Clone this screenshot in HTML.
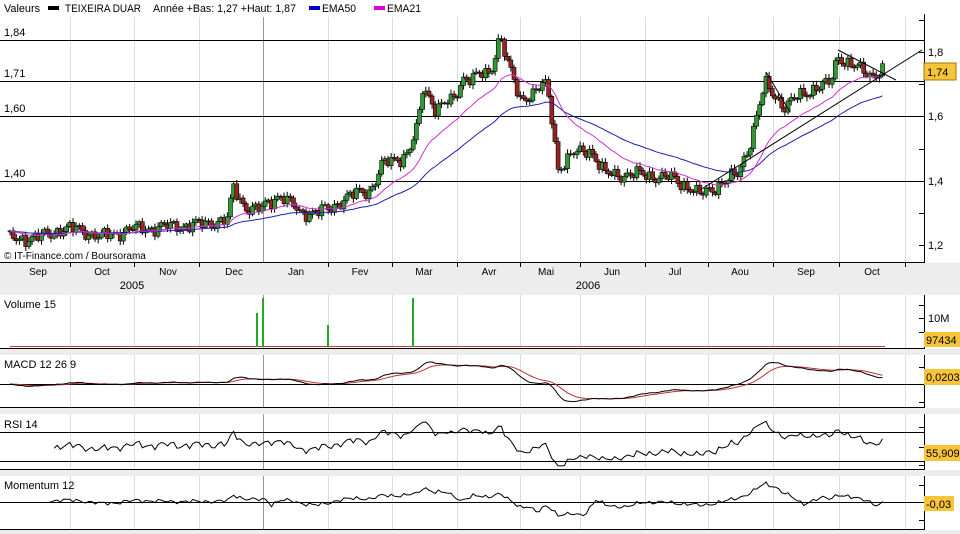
<!DOCTYPE html>
<html><head><meta charset="utf-8">
<style>
html,body{margin:0;padding:0;background:#ededed;}
body{width:960px;height:534px;overflow:hidden;position:relative;font-family:"Liberation Sans",sans-serif;}
svg{position:absolute;left:0;top:0;}
text{font-family:"Liberation Sans",sans-serif;font-size:11px;fill:#000;}
</style></head><body>
<svg id="s" width="960" height="534" xmlns="http://www.w3.org/2000/svg">
<rect x="0" y="0" width="960" height="263" fill="#fff"/>
<rect x="0" y="295" width="960" height="54" fill="#fff"/>
<rect x="0" y="355" width="960" height="53" fill="#fff"/>
<rect x="0" y="414" width="960" height="56" fill="#fff"/>
<rect x="0" y="476" width="960" height="54" fill="#fff"/>
<g id="grid" stroke="#dcdcdc" stroke-width="1"></g>
<g stroke="#000" stroke-width="1">
<line x1="0" y1="40.5" x2="924" y2="40.5"/>
<line x1="0" y1="81.5" x2="924" y2="81.5"/>
<line x1="0" y1="116.5" x2="924" y2="116.5"/>
<line x1="0" y1="181.5" x2="924" y2="181.5"/>
<line x1="0" y1="262.5" x2="924" y2="262.5"/>
<line x1="0" y1="348.5" x2="924" y2="348.5"/>
<line x1="0" y1="384.5" x2="924" y2="384.5"/>
<line x1="0" y1="407.5" x2="924" y2="407.5"/>
<line x1="0" y1="432.5" x2="924" y2="432.5"/>
<line x1="0" y1="461.5" x2="924" y2="461.5"/>
<line x1="0" y1="469.5" x2="924" y2="469.5"/>
<line x1="0" y1="502.5" x2="924" y2="502.5"/>
<line x1="0" y1="529.5" x2="924" y2="529.5"/>
<line x1="924.5" y1="14" x2="924.5" y2="263"/>
<line x1="924.5" y1="295" x2="924.5" y2="349"/>
<line x1="924.5" y1="355" x2="924.5" y2="408"/>
<line x1="924.5" y1="414" x2="924.5" y2="470"/>
<line x1="924.5" y1="476" x2="924.5" y2="530"/>
</g>
<g stroke="#000">
<line x1="919" y1="20.5" x2="924" y2="20.5"/><line x1="919" y1="52.5" x2="924" y2="52.5"/><line x1="919" y1="84.5" x2="924" y2="84.5"/>
<line x1="919" y1="116.5" x2="924" y2="116.5"/><line x1="919" y1="149.5" x2="924" y2="149.5"/><line x1="919" y1="181.5" x2="924" y2="181.5"/>
<line x1="919" y1="213.5" x2="924" y2="213.5"/><line x1="919" y1="245.5" x2="924" y2="245.5"/>
<line x1="919" y1="305.5" x2="924" y2="305.5"/><line x1="919" y1="318.5" x2="924" y2="318.5"/><line x1="919" y1="332.5" x2="924" y2="332.5"/>
<line x1="919" y1="367.5" x2="924" y2="367.5"/><line x1="919" y1="402.5" x2="924" y2="402.5"/>
<line x1="919" y1="427.5" x2="924" y2="427.5"/><line x1="919" y1="447.5" x2="924" y2="447.5"/><line x1="919" y1="465.5" x2="924" y2="465.5"/>
<line x1="919" y1="485.5" x2="924" y2="485.5"/><line x1="919" y1="520.5" x2="924" y2="520.5"/>
</g>
<g id="data"></g>
<g stroke="#000" stroke-width="1" fill="none">
<line x1="700" y1="190" x2="922" y2="50"/>
<line x1="766" y1="72" x2="790" y2="112"/>
<line x1="838" y1="50" x2="896" y2="80"/>
</g>
<text x="4" y="12" textLength="36" lengthAdjust="spacingAndGlyphs">Valeurs</text>
<rect x="48" y="6" width="11" height="4" fill="#000"/>
<text x="65" y="12" textLength="76" lengthAdjust="spacingAndGlyphs">TEIXEIRA DUAR</text>
<text x="153" y="12" textLength="143" lengthAdjust="spacingAndGlyphs">Année +Bas: 1,27 +Haut: 1,87</text>
<rect x="309" y="6" width="11" height="4" fill="#0000cc"/>
<text x="322" y="12" textLength="34" lengthAdjust="spacingAndGlyphs">EMA50</text>
<rect x="374" y="6" width="11" height="4" fill="#dd00dd"/>
<text x="387" y="12" textLength="34" lengthAdjust="spacingAndGlyphs">EMA21</text>
<text x="4" y="36">1,84</text>
<text x="4" y="77">1,71</text>
<text x="4" y="112">1,60</text>
<text x="4" y="177">1,40</text>
<text x="928" y="56">1,8</text>
<text x="928" y="120">1,6</text>
<text x="928" y="185">1,4</text>
<text x="928" y="249">1,2</text>
<rect x="924" y="63" width="32" height="17" fill="#f8c53a" stroke="#a07800"/>
<text x="927" y="76">1,74</text>
<text x="4" y="259" style="font-size:10px">© IT-Finance.com / Boursorama</text>
<g style="font-size:10px">
<text x="38" y="275" text-anchor="middle" style="font-size:10px">Sep</text>
<text x="102" y="275" text-anchor="middle" style="font-size:10px">Oct</text>
<text x="168" y="275" text-anchor="middle" style="font-size:10px">Nov</text>
<text x="234" y="275" text-anchor="middle" style="font-size:10px">Dec</text>
<text x="296" y="275" text-anchor="middle" style="font-size:10px">Jan</text>
<text x="360" y="275" text-anchor="middle" style="font-size:10px">Fev</text>
<text x="424" y="275" text-anchor="middle" style="font-size:10px">Mar</text>
<text x="489" y="275" text-anchor="middle" style="font-size:10px">Avr</text>
<text x="546" y="275" text-anchor="middle" style="font-size:10px">Mai</text>
<text x="612" y="275" text-anchor="middle" style="font-size:10px">Jun</text>
<text x="675" y="275" text-anchor="middle" style="font-size:10px">Jul</text>
<text x="740" y="275" text-anchor="middle" style="font-size:10px">Aou</text>
<text x="806" y="275" text-anchor="middle" style="font-size:10px">Sep</text>
<text x="872" y="275" text-anchor="middle" style="font-size:10px">Oct</text>
<text x="132" y="289" text-anchor="middle">2005</text>
<text x="588" y="289" text-anchor="middle">2006</text>
</g>
<text x="4" y="308">Volume 15</text>
<text x="928" y="322">10M</text>
<rect x="924" y="332" width="36" height="15" fill="#f8c53a"/>
<text x="926" y="344">97434</text>
<text x="4" y="368">MACD 12 26 9</text>
<rect x="924" y="369" width="36" height="16" fill="#f8c53a"/>
<text x="926" y="381">0,0203</text>
<text x="4" y="428">RSI 14</text>
<rect x="924" y="445" width="36" height="16" fill="#f8c53a"/>
<text x="926" y="457">55,909</text>
<text x="4" y="489">Momentum 12</text>
<rect x="924" y="496" width="30" height="15" fill="#f8c53a"/>
<text x="926" y="508">-0,03</text>
</svg>
<script>
(function(){
var NS="http://www.w3.org/2000/svg";
function el(p,t,a){var e=document.createElementNS(NS,t);for(var k in a)e.setAttribute(k,a[k]);p.appendChild(e);return e;}
var grid=document.getElementById('grid'),d=document.getElementById('data');
var gx=[70,134,199,328,392,457,520,580,645,708,773,839,905];
var bands=[[17,262],[295,348],[355,407],[414,469],[476,529]];
gx.forEach(function(x){bands.forEach(function(b){el(grid,'line',{x1:x+.5,y1:b[0],x2:x+.5,y2:b[1]});});
 el(grid,'line',{x1:x+.5,y1:262,x2:x+.5,y2:267,stroke:'#000'});});
bands.forEach(function(b){el(grid,'line',{x1:263.5,y1:b[0],x2:263.5,y2:b[1],stroke:'#999'});});
var K=[[10,1.22],[40,1.225],[60,1.25],[80,1.25],[100,1.225],[130,1.25],[200,1.265],[228,1.28],[233,1.38],[245,1.32],[260,1.31],[280,1.36],[300,1.30],[330,1.31],[345,1.35],[370,1.37],[382,1.45],[400,1.47],[408,1.49],[418,1.57],[423,1.69],[435,1.63],[455,1.65],[462,1.72],[490,1.73],[500,1.86],[508,1.76],[520,1.65],[545,1.70],[550,1.64],[558,1.44],[572,1.48],[590,1.50],[605,1.42],[640,1.42],[670,1.41],[690,1.38],[700,1.355],[720,1.39],[738,1.42],[750,1.52],[765,1.70],[785,1.63],[798,1.66],[815,1.69],[830,1.70],[838,1.79],[850,1.76],[870,1.73],[885,1.745]];
function interp(x){for(var i=1;i<K.length;i++){if(x<=K[i][0]){var a=K[i-1],b=K[i],t=(x-a[0])/(b[0]-a[0]);return a[1]+t*(b[1]-a[1]);}}return K[K.length-1][1];}
function Y(p){return 52+(1.8-p)*322.5;}
var xs=[],cl=[];var step=3.15;
for(var x=10;x<=885;x+=step){xs.push(x);var i=xs.length;cl.push(interp(x)+0.014*Math.sin(i*1.7)+0.01*Math.sin(i*0.63+1)+0.006*Math.sin(i*2.9));}
var prev=cl[0];
for(var i=0;i<cl.length;i++){var o=prev,c=cl[i];prev=c;var hi=Math.max(o,c)+0.004+0.01*Math.abs(Math.sin(i*2.3)),lo=Math.min(o,c)-0.004-0.01*Math.abs(Math.cos(i*1.9));
 var x=xs[i];el(d,'line',{x1:x,y1:Y(hi),x2:x,y2:Y(lo),stroke:'#000','stroke-width':1});
 var y1=Y(Math.max(o,c)),y2=Y(Math.min(o,c));var h=Math.max(1,y2-y1);
 el(d,'rect',{x:x-2,y:y1,width:4,height:h,fill:c>=o?'#2f9a2f':'#9a2424',stroke:'#000','stroke-width':0.6});}
function ema(a,n){var k=2/(n+1),r=[],e=a[0];for(var i=0;i<a.length;i++){e=a[i]*k+e*(1-k);r.push(e);}return r;}
function poly(arr,fy,col,w,start){var pts=[];for(var i=start||0;i<arr.length;i++)pts.push(xs[i].toFixed(1)+','+fy(arr[i]).toFixed(1));el(d,'polyline',{points:pts.join(' '),fill:'none',stroke:col,'stroke-width':w||1});}
var e21=ema(cl,21),e50=ema(cl,50);
poly(e50,Y,'#2020b0',1);poly(e21,Y,'#d030d0',1);
el(d,'line',{x1:10,y1:346.5,x2:885,y2:346.5,stroke:'#c04040'});
[[257,313],[263,298],[328,325],[413,298]].forEach(function(v){el(d,'line',{x1:v[0],y1:v[1],x2:v[0],y2:347,stroke:'#22aa22','stroke-width':2});});
var e12=ema(cl,12),e26=ema(cl,26),m=[];for(var i=0;i<cl.length;i++)m.push(e12[i]-e26[i]);var sg=ema(m,9);
var mx=0;m.forEach(function(v){mx=Math.max(mx,Math.abs(v));});var km=22/mx;
poly(sg,function(v){return 384-v*km;},'#c03030',1);poly(m,function(v){return 384-v*km;},'#000',1);
var r=[50],ag=0,al=0;for(var i=1;i<cl.length;i++){var ch=cl[i]-cl[i-1];var g=Math.max(ch,0),l=Math.max(-ch,0);if(i<=14){ag+=g/14;al+=l/14;}else{ag=(ag*13+g)/14;al=(al*13+l)/14;}r.push(al==0?100:100-100/(1+ag/al));}
poly(r,function(v){return Math.max(415,Math.min(468,483-v*0.725));},'#000',1,14);
var mo=[];for(var i=12;i<cl.length;i++)mo.push(cl[i]-cl[i-12]);var mm=0;mo.forEach(function(v){mm=Math.max(mm,Math.abs(v));});
var pts=[];for(var j=0;j<mo.length;j++)pts.push(xs[j+12].toFixed(1)+','+(502-mo[j]*20/mm).toFixed(1));
el(d,'polyline',{points:pts.join(' '),fill:'none',stroke:'#000','stroke-width':1});
})();
</script>
</body></html>
